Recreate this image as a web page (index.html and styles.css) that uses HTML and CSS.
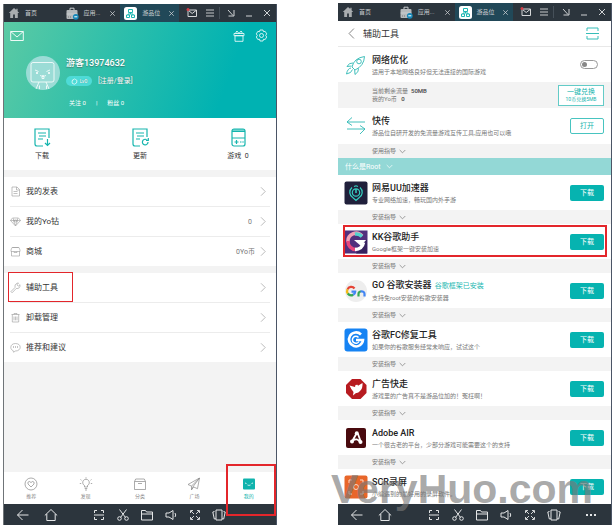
FILE: index.html
```html
<!DOCTYPE html>
<html lang="zh-CN">
<head>
<meta charset="utf-8">
<title>辅助工具</title>
<link rel="stylesheet" href="styles.css">
</head>
<body>
<svg class="sprite" aria-hidden="true">
  <symbol id="home" viewBox="0 0 12 12"><path d="M6 1 .8 6h1.4v5h2.9V7.600h1.800V11h2.900V6h1.400L9.600 4.200V1.700H8.300v1.400z" fill="#a9adb0"/></symbol>
  <symbol id="bag" viewBox="0 0 13 13"><path d="M4 3V1.200h4V3" fill="none" stroke="#c9ccce"/><rect x=".5" y="3" width="11" height="9" rx="1" fill="#b5b9bc"/><path d="M.5 7h11" stroke="#d8dadb" stroke-width=".6"/><path d="M2 10h4" stroke="#777" stroke-dasharray="1 1"/><circle cx="9.800" cy="9.800" r="2.900" fill="#1687b8"/><path d="M8.300 9.800h3" stroke="#fff"/></symbol>
  <symbol id="brand" viewBox="0 0 13 13"><rect width="13" height="13" rx="2.500" fill="#fff"/><path d="M4.500 2.500h4v3h-4zM2.500 8h3v2.500h-3zM7.500 8h3v2.500h-3zM6.500 5.500V7M4 8V7h5v1" fill="none" stroke="#1cb7b3"/></symbol>
  <symbol id="mailtab" viewBox="0 0 12 12"><path d="M2 3h8.500v6.500H2zM2.500 3.500l3.700 3 3.800-3" fill="none" stroke="#d5d7d9"/><circle cx="2" cy="2.500" r="1.500" fill="#d33c46"/></symbol>
  <symbol id="menu" viewBox="0 0 12 12"><path d="M2 3h8M2 6h8M2 9h8" stroke="#c5c8ca"/></symbol>
  <symbol id="shrink" viewBox="0 0 12 12"><path d="M3 3l5 5.500M9 3v6H3.500" fill="none" stroke="#d0d3d5"/></symbol>
  <symbol id="min" viewBox="0 0 12 12"><path d="M3 9h6" stroke="#d0d3d5"/></symbol>
  <symbol id="close" viewBox="0 0 12 12"><path d="M3 3l6 6M9 3l-6 6" stroke="#d0d3d5"/></symbol>
  <symbol id="chev" viewBox="0 0 6 10"><path d="M1 .8 5.200 5 1 9.200" fill="none" stroke="#aaa" stroke-width=".8"/></symbol>
  <symbol id="down" viewBox="0 0 7 5"><path d="M.7 1l2.800 2.800L6.300 1" fill="none" stroke="currentColor" stroke-width=".7"/></symbol>
  <symbol id="envelope" viewBox="0 0 14 12"><path d="M.7 1.500h12.600v9H.7zM.7 1.500 7 7l6.300-5.500" fill="none" stroke="#fff" stroke-width=".9"/></symbol>
  <symbol id="gift" viewBox="0 0 12 12"><path d="M1 3.500h10v2.200H1zM2 5.700h8v5.600H2zM6 3.500 4 1 2.800 2.200l1 1.300M6 3.500 8 1l1.200 1.200-1 1.300" fill="none" stroke="#fff" stroke-width=".8"/></symbol>
  <symbol id="gear" viewBox="0 0 13 13"><path d="M5 1h3l.5 1.700 1.700-.3 1.500 2.500-1 1.500 1 1.600-1.500 2.500-1.700-.3L8 12H5l-.5-1.800-1.700.3L1.300 8l1-1.600-1-1.500 1.500-2.500 1.700.3z" fill="none" stroke="#fff" stroke-width=".8" stroke-linejoin="round"/><circle cx="6.500" cy="6.500" r="2" fill="none" stroke="#fff" stroke-width=".8"/></symbol>
  <symbol id="avatar" viewBox="0 0 34 34"><circle cx="17" cy="17" r="17" fill="#9bdcd6"/><g fill="none" stroke="#fff" stroke-width=".8"><rect x="5" y="6.500" width="23" height="19.500" rx="2"/><path d="M10 33l3-7M23 33l-3-7M13.500 29.500v3.500M20.500 29.500v3.500M9 14l3.500 1.500M24 14l-3.500 1.500M14 19.500q1.500 1 3 0 1.500 1 3 0M16 20.500h2v2h-2z"/></g><circle cx="11" cy="17" r="1" fill="#fff"/><circle cx="23" cy="17" r="1" fill="#fff"/></symbol>
  <symbol id="dl" viewBox="0 0 17 19"><g fill="none" stroke="#16b5ae" stroke-width="1.200"><path d="M9 18H3q-2 0-2-2V1h14v9M4 5h8M5 8h7M4 11h5M13.500 11v6.500M11 15l2.500 2.500L16 15"/></g></symbol>
  <symbol id="upd" viewBox="0 0 17 19"><g fill="none" stroke="#16b5ae" stroke-width="1.200"><path d="M8 18H3q-2 0-2-2V1h14v8M4 5h8M5 8h7M4 11h4M16 14a2.800 2.800 0 1 1-1.500-2.400M16.300 10v2.300H14"/></g></symbol>
  <symbol id="game" viewBox="0 0 17 19"><g fill="none" stroke="#16b5ae" stroke-width="1.200"><rect x="2" y="1" width="13" height="17" rx="2"/><path d="M2 10h13M2 3.500h13M4.500 14h4M6.500 12v4M10 14h1.500M12.300 14h1.500"/></g><rect x="2" y="1" width="13" height="3" rx="1" fill="#16b5ae" opacity=".6"/></symbol>
  <symbol id="doc" viewBox="0 0 11 11"><path d="M2 1h5l2.500 2.500V10H2zM6.500 1v3H9.500M3.500 5.500h4M3.500 7.500h4" fill="none" stroke="#999" stroke-width=".6"/></symbol>
  <symbol id="gem" viewBox="0 0 11 11"><path d="M2.500 2h6L10.500 4.500 5.500 10 .5 4.500zM.5 4.500h10M3.500 2.500V5l2 4.500 2-4.500V2.500M4.500 4h2v2h-2z" fill="none" stroke="#999" stroke-width=".6"/></symbol>
  <symbol id="shop" viewBox="0 0 11 11"><path d="M2.500 1.500h6M1 4l1-2.500h7L10 4v1.500H1zM1.500 5.500V10h8V5.500M4 5.500v1h3v-1" fill="none" stroke="#999" stroke-width=".6"/></symbol>
  <symbol id="wrench" viewBox="0 0 11 11"><path d="M1 9.500 5 5.500Q4.200 2.500 7 1.200L8.500 1 7 2.800 8.300 4.200 10 2.700Q10.300 7 6.200 6.500L2.500 10.400Q1.500 10.800 1 9.500z" fill="none" stroke="#999" stroke-width=".6"/></symbol>
  <symbol id="trash" viewBox="0 0 11 11"><path d="M1.500 2.500h8M4 2.500v-1h3v1M2.300 2.500V10h6.400V2.500M4 4.500v3.800M5.500 4.500v3.800M7 4.500v3.800" fill="none" stroke="#999" stroke-width=".6"/></symbol>
  <symbol id="chat" viewBox="0 0 11 11"><path d="M5.500 1.500c3 0 4.700 1.700 4.700 3.700S8.500 9 5.500 9L3.500 10.200 3.200 8.700C1.500 8 .8 6.800.8 5.300.8 3.200 2.500 1.500 5.500 1.500z" fill="none" stroke="#999" stroke-width=".6"/><path d="M3 5h1M5 5h1M7 5h1" stroke="#888"/></symbol>
  <symbol id="heart" viewBox="0 0 14 14"><circle cx="7" cy="7" r="6" fill="none" stroke="#888" stroke-width=".7"/><path d="M7 10 4 7Q3.200 4.800 5.300 4.500 6.500 4.500 7 5.700 7.500 4.500 8.700 4.500 10.800 4.800 10 7z" fill="none" stroke="#888" stroke-width=".7"/></symbol>
  <symbol id="bulb" viewBox="0 0 14 14"><path d="M5.500 10V8.500A3.300 3.300 0 1 1 8.500 8.500V10zM5.700 11.500h2.600M6 13h2M7 .3v1.200M1.500 2.500l1 .8M12.500 2.500l-1 .8M.8 6.500h1.400M11.800 6.500h1.400" fill="none" stroke="#888" stroke-width=".7"/></symbol>
  <symbol id="box" viewBox="0 0 14 14"><path d="M1.500 4.500h11v8h-11zM1.500 4.500l1.200-2.500h8.600l1.200 2.500M5 6.500h4" fill="none" stroke="#888" stroke-width=".7"/></symbol>
  <symbol id="plane" viewBox="0 0 14 14"><path d="M12.500 1 1 7.500l3.500 1.600 8-8.100-6.500 8.700 4.500 2zM4.500 9.100v3.700l1.500-3M6.500 10.200l-2 2.600" fill="none" stroke="#888" stroke-width=".7"/></symbol>
  <symbol id="me" viewBox="0 0 14 14"><rect x="1" y="1.500" width="12" height="11" rx="1" fill="#10b3ad"/><path d="M3 6l1.500.5M11 6l-1.500.5M5.500 8q.8.800 1.500 0 .8.800 1.500 0" fill="none" stroke="#fff" stroke-width=".8"/></symbol>
  <symbol id="nback" viewBox="0 0 14 14"><path d="M12.500 7h-11M6.500 2 1.500 7l5 5" fill="none" stroke="#e4e6e7"/></symbol>
  <symbol id="nhome" viewBox="0 0 14 14"><path d="M.8 7.500 7 1.500l6.200 6M2.800 6v6.500h8.400V6" fill="none" stroke="#e4e6e7"/></symbol>
  <symbol id="nscan" viewBox="0 0 14 14"><path d="M5 2.500H2.500V5M9 2.500h2.500V5M5 11.500H2.500V9M9 11.500h2.500V9M2 7h10" fill="none" stroke="#e4e6e7"/></symbol>
  <symbol id="ncut" viewBox="0 0 14 14"><g fill="none" stroke="#e4e6e7"><path d="M3.500 1.500l6 8M10.500 1.500l-6 8"/><circle cx="3.500" cy="10.500" r="1.800"/><circle cx="10.500" cy="10.500" r="1.800"/></g></symbol>
  <symbol id="nfolder" viewBox="0 0 14 14"><path d="M1.500 2.500h4l1 1.500h6v8h-11zM1.500 6h11" fill="none" stroke="#e4e6e7"/></symbol>
  <symbol id="nsound" viewBox="0 0 14 14"><path d="M2 5h3l4-2.500v9L5 9H2zM11 5q1.500 2 0 4" fill="none" stroke="#e4e6e7"/></symbol>
  <symbol id="nfull" viewBox="0 0 14 14"><path d="M5 2.500H2.500V5M9 2.500h2.500V5M5 11.500H2.500V9M9 11.500h2.500V9M3 3l3 3M11 3 8 6M3 11l3-3M11 11 8 8" fill="none" stroke="#e4e6e7" stroke-width=".9"/></symbol>
  <symbol id="nshake" viewBox="0 0 14 14"><path d="M4 2h6v10H4zM2.500 3.500.8 4l1.500 7 1.500-.3M11.500 3.500l1.700.5-1.500 7-1.500-.3" fill="none" stroke="#e4e6e7"/></symbol>
  <symbol id="nmore" viewBox="0 0 14 14"><path d="M2 7h2M6 7h2M10 7h2" stroke="#e4e6e7" stroke-width="2"/></symbol>
</svg>

<main class="stage">
  <section class="phone profile">
    <header class="tabs">
      <div class="tab"><svg class="i12"><use href="#home"/></svg><span>首页</span></div>
      <div class="tab"><svg class="i13"><use href="#bag"/></svg><span>应用...</span><button class="x" aria-label="关闭"><svg class="i9"><use href="#close"/></svg></button></div>
      <div class="tab active"><svg class="i13"><use href="#brand"/></svg><span>游品位</span><button class="x" aria-label="关闭"><svg class="i9"><use href="#close"/></svg></button></div>
      <div class="tools">
        <button aria-label="邮件"><svg class="i12"><use href="#mailtab"/></svg></button><button class="cut" aria-label="菜单"><svg class="i12"><use href="#menu"/></svg></button><button aria-label="缩小"><svg class="i12"><use href="#shrink"/></svg></button><button aria-label="最小化"><svg class="i12"><use href="#min"/></svg></button><button aria-label="关闭"><svg class="i12"><use href="#close"/></svg></button>
      </div>
    </header>
    <div class="hero">
      <div class="hero-bar">
        <button aria-label="消息"><svg class="env"><use href="#envelope"/></svg></button>
        <button class="push" aria-label="礼物"><svg class="i12"><use href="#gift"/></svg></button>
        <button aria-label="设置"><svg class="i13"><use href="#gear"/></svg></button>
      </div>
      <div class="user">
        <svg class="avatar"><use href="#avatar"/></svg>
        <div class="who">
          <h1>游客13974632</h1>
          <div class="level"><span class="lv"><svg viewBox="0 0 7 7"><path d="M1.500 2 3 1.500 3.500.8l1 .7L6 2.500 5.500 5 3.500 6.200 1.500 5.500 1 4z" fill="none" stroke="#fff" stroke-width=".7"/></svg>Lv0</span><a href="#">[注册/登录]</a></div>
          <div class="stats"><span>关注 0</span><span>|</span><span>粉丝 0</span></div>
        </div>
      </div>
    </div>
    <div class="quick">
      <button><svg><use href="#dl"/></svg>下载</button>
      <button><svg><use href="#upd"/></svg>更新</button>
      <button><svg><use href="#game"/></svg>游戏&nbsp; 0</button>
    </div>
    <div class="list">
      <a href="#"><svg class="i11"><use href="#doc"/></svg>我的发表<svg class="chev"><use href="#chev"/></svg></a>
      <a href="#"><svg class="i11"><use href="#gem"/></svg>我的Yo钻<span class="val far">0</span><svg class="chev"><use href="#chev"/></svg></a>
      <a href="#"><svg class="i11"><use href="#shop"/></svg>商城<span class="val">0Yo币</span><svg class="chev"><use href="#chev"/></svg></a>
    </div>
    <div class="list">
      <a href="#" class="marked"><svg class="i11"><use href="#wrench"/></svg>辅助工具<svg class="chev"><use href="#chev"/></svg></a>
      <a href="#"><svg class="i11"><use href="#trash"/></svg>卸载管理<svg class="chev"><use href="#chev"/></svg></a>
      <a href="#"><svg class="i11"><use href="#chat"/></svg>推荐和建议<svg class="chev"><use href="#chev"/></svg></a>
    </div>
    <nav class="bottom">
      <a href="#"><svg class="i14"><use href="#heart"/></svg>推荐</a>
      <a href="#"><svg class="i14"><use href="#bulb"/></svg>发现</a>
      <a href="#"><svg class="i14"><use href="#box"/></svg>分类</a>
      <a href="#"><svg class="i14"><use href="#plane"/></svg>广场</a>
      <a href="#" class="on"><svg class="i14"><use href="#me"/></svg>我的</a>
    </nav>
    <footer class="nav">
      <button aria-label="返回"><svg class="i14"><use href="#nback"/></svg></button><button class="house" aria-label="主页"><svg class="i14"><use href="#nhome"/></svg></button><button aria-label="扫描"><svg class="i14"><use href="#nscan"/></svg></button><button aria-label="剪切"><svg class="i14"><use href="#ncut"/></svg></button><button aria-label="文件"><svg class="i14"><use href="#nfolder"/></svg></button><button aria-label="声音"><svg class="i14"><use href="#nsound"/></svg></button><button aria-label="全屏"><svg class="i14"><use href="#nfull"/></svg></button><button aria-label="摇一摇"><svg class="i14"><use href="#nshake"/></svg></button><button class="more" aria-label="更多"><svg class="i14"><use href="#nmore"/></svg></button>
    </footer>
  </section>

  <section class="phone toolbox">
    <header class="tabs">
      <div class="tab"><svg class="i12"><use href="#home"/></svg><span>首页</span></div>
      <div class="tab"><svg class="i13"><use href="#bag"/></svg><span>应用...</span><button class="x" aria-label="关闭"><svg class="i9"><use href="#close"/></svg></button></div>
      <div class="tab active"><svg class="i13"><use href="#brand"/></svg><span>游品位</span><button class="x" aria-label="关闭"><svg class="i9"><use href="#close"/></svg></button></div>
      <div class="tools">
        <button aria-label="邮件"><svg class="i12"><use href="#mailtab"/></svg></button><button class="cut" aria-label="菜单"><svg class="i12"><use href="#menu"/></svg></button><button aria-label="缩小"><svg class="i12"><use href="#shrink"/></svg></button><button aria-label="最小化"><svg class="i12"><use href="#min"/></svg></button><button aria-label="关闭"><svg class="i12"><use href="#close"/></svg></button>
      </div>
    </header>
    <div class="title">
      <button aria-label="返回"><svg class="back" viewBox="0 0 6 10"><path d="M5.200.5.800 5l4.400 4.500" fill="none" stroke="#777" stroke-width=".8"/></svg></button>
      <h2>辅助工具</h2>
      <button class="push" aria-label="扫描"><svg class="i13" viewBox="0 0 13 13"><path d="M1 4V1h11v3M1 9v3h11V9M0 6.500h13" fill="none" stroke="#35bdb8"/></svg></button>
    </div>
    <article class="app">
      <svg class="logo" viewBox="0 0 24 24"><g fill="none" stroke="#2fb9b4" stroke-width=".9"><path d="M8 14Q10 5 20.500 3.500 20 13 11 17zM9 10Q5 9.500 3 13.500l4.500-.500M14.500 15.500Q15 19 11 21.500l-.3-4.500M7 15q-3.500.500-4.500 6 5-.800 6-4.500"/><circle cx="15" cy="8.500" r="2.300"/></g></svg>
      <div class="info"><h3><label for="net">网络优化</label></h3><p>适用于本地网络良好但无法连接的国际游戏</p></div>
      <input type="checkbox" id="net" class="switch">
    </article>
    <div class="quota">
      <div><p>当前剩余流量&nbsp; <b>50MB</b></p><p>我的Yo币&nbsp;&nbsp; <b>0</b></p></div>
      <button class="redeem">一键兑换<small>10币兑换5MB</small></button>
    </div>
    <article class="app roomy">
      <svg class="logo" viewBox="0 0 24 24"><path d="M21 8H3l5-4.500M3 8l5 3.500M3 15h18l-5-3.500M21 15l-5 5" fill="none" stroke="#2fb9b4" stroke-width=".9"/></svg>
      <div class="info"><h3>快传</h3><p>游品位自研开发的免流量游戏互传工具,应用也可以哦</p></div>
      <button class="get open">打开</button>
    </article>
    <button class="guide">使用指导<svg><use href="#down"/></svg></button>
    <button class="root">什么是Root<svg><use href="#down"/></svg></button>

    <article class="app">
      <svg class="logo" viewBox="0 0 24 24"><rect x=".5" y=".5" width="23" height="23" rx="2" fill="#20203b"/><g fill="none" stroke="#35cfc0" stroke-width="1.200"><path d="M8 6.500a6.300 6.300 0 0 0 1 10.300l3 2.700 3-2.700a6.300 6.300 0 0 0 1-10.300M10 5.500l2-.7 2 .7"/><circle cx="12" cy="11.500" r="3.700"/></g><path d="M12 8v4" stroke="#35cfc0" stroke-width="1.500"/></svg>
      <div class="info"><h3>网易UU加速器</h3><p>专业网络加速，畅玩国内外手游</p></div><button class="get">下载</button>
    </article>
    <button class="guide">安装指导<svg><use href="#down"/></svg></button>
    <article class="app marked">
      <svg class="logo" viewBox="0 0 24 24"><rect x=".5" y=".5" width="23" height="23" fill="#51307d"/><path d="M12 23.500 23 9v14.500z" fill="#37215f"/><path d="M18 6A8 8 0 0 0 4 12" fill="none" stroke="#f2a0b5" stroke-width="3.500"/><path d="M4 11a8 8 0 0 0 8 8.500" fill="none" stroke="#e6477e" stroke-width="3.500"/><path d="M11 19.500q7 0 8.500-7" fill="none" stroke="#fff" stroke-width="3.500"/><path d="M10 10h12l-5 6z" fill="#fff"/><path d="M11 4.200q4-.700 7 2.300" fill="none" stroke="#53d2cc" stroke-width="3.500"/></svg>
      <div class="info"><h3>KK谷歌助手</h3><p>Google框架一键安装加速</p></div><button class="get">下载</button>
    </article>
    <button class="guide">安装指导<svg><use href="#down"/></svg></button>
    <article class="app">
      <svg class="logo" viewBox="0 0 24 24"><circle cx="12" cy="12" r="11" fill="#eee"/><g fill="none" stroke-width="2.200"><path d="M10.500 9.500A4 4 0 0 0 3.500 10.500" stroke="#e54335"/><path d="M3.500 10.300a4.500 4.500 0 0 0 .3 4.400" stroke="#f5b912"/><path d="M3.700 14.500q2.500 3 5.500 1.200" stroke="#36a852"/><path d="M7.500 12.700h3.700q0 2-2 3.100" stroke="#4285f4"/><path d="M14.500 17.500v-2.500q0-2.500 2.500-2.500" stroke="#36a852"/><path d="M16.500 12.500q4-.500 4 2.500v2.500" stroke="#4285f4"/></g></svg>
      <div class="info"><h3>GO 谷歌安装器 <em>谷歌框架已安装</em></h3><p>支持免root安装的谷歌安装器</p></div><button class="get">下载</button>
    </article>
    <button class="guide">安装指导<svg><use href="#down"/></svg></button>
    <article class="app">
      <svg class="logo" viewBox="0 0 24 24"><rect x=".5" y=".5" width="23" height="23" rx="3" fill="#1683f3"/><path d="M17 6.500A7 7 0 1 0 19 12h-7" fill="none" stroke="#fff" stroke-width="2.600"/><path d="M14.500 9.500a3.500 3.500 0 1 0 .5 4" fill="none" stroke="#fff" stroke-width="1.500"/></svg>
      <div class="info"><h3>谷歌FC修复工具</h3><p>如果你的谷歌服务经常未响应，试试这个</p></div><button class="get">下载</button>
    </article>
    <button class="guide">安装指导<svg><use href="#down"/></svg></button>
    <article class="app">
      <svg class="logo" viewBox="0 0 24 24"><path d="M8 2h8.500L22.500 8v8l-6 6H8L2 16V8z" fill="#b71b20"/><path d="M5.500 8.500 11 10l.5-2 2-.3.5 1L18.500 6q.5 5-2.500 8-2 2.500-4 2l-3 2.500.5-3.500q-2-2-4-6.500z" fill="#fff"/></svg>
      <div class="info"><h3>广告快走</h3><p>游戏里的广告真不是游品位加的！冤枉啊！</p></div><button class="get">下载</button>
    </article>
    <button class="guide">安装指导<svg><use href="#down"/></svg></button>
    <article class="app">
      <svg class="logo" viewBox="0 0 24 24"><rect x="2" y="2" width="20" height="20" rx="2" fill="#490a0e"/><g fill="none" stroke="#fff" stroke-width="1.800"><path d="M12.500 7.500 8 15.500M14 8l2.500 7M9 14.500q4-3 7 1.500"/></g><circle cx="12.800" cy="7.300" r="2" fill="#fff"/><circle cx="8" cy="15.500" r="2" fill="#fff"/><circle cx="16.500" cy="16" r="2" fill="#fff"/></svg>
      <div class="info"><h3>Adobe AIR</h3><p>一个很古老的平台，少部分游戏可能需要这个的支持</p></div><button class="get">下载</button>
    </article>
    <button class="guide">安装指导<svg><use href="#down"/></svg></button>
    <article class="app">
      <svg class="logo" viewBox="0 0 24 24"><rect x=".5" y=".5" width="23" height="23" rx="2" fill="#e8662a"/><g fill="none" stroke="#fbd9c5"><path d="M8 5H5v3M16 5h3v3M8 19H5v-3M16 19h3v-3"/><circle cx="12" cy="12" r="2.500"/></g></svg>
      <div class="info"><h3>SCR录屏</h3><p>小编遇到的最好用的录屏软件。</p></div><button class="get">下载</button>
    </article>
    <footer class="nav">
      <button aria-label="返回"><svg class="i14"><use href="#nback"/></svg></button><button class="house" aria-label="主页"><svg class="i14"><use href="#nhome"/></svg></button><button aria-label="扫描"><svg class="i14"><use href="#nscan"/></svg></button><button aria-label="剪切"><svg class="i14"><use href="#ncut"/></svg></button><button aria-label="文件"><svg class="i14"><use href="#nfolder"/></svg></button><button aria-label="声音"><svg class="i14"><use href="#nsound"/></svg></button><button aria-label="全屏"><svg class="i14"><use href="#nfull"/></svg></button><button aria-label="摇一摇"><svg class="i14"><use href="#nshake"/></svg></button><button class="more" aria-label="更多"><svg class="i14"><use href="#nmore"/></svg></button>
    </footer>
    <span class="watermark">VeryHuo.com</span>
  </section>
</main>
</body>
</html>
```
FILE: styles.css
```css
* { box-sizing: border-box; }
body {
  margin: 0;
  background: #fff;
  color: #333;
  font: 6px/10px Roboto, "Noto Sans CJK SC", sans-serif;
}
h1, h2, h3, p { margin: 0; font-weight: 400; }
a { color: inherit; text-decoration: none; }
button {
  margin: 0;
  padding: 0;
  border: 0;
  background: none;
  color: inherit;
  font: inherit;
  display: flex;
  align-items: center;
  justify-content: center;
}
svg { display: block; flex: none; }
.sprite { position: absolute; width: 0; height: 0; }
.i9 { width: 9px; height: 9px; }
.i11 { width: 11px; height: 11px; }
.i12 { width: 12px; height: 12px; }
.i13 { width: 13px; height: 13px; }
.i14 { width: 14px; height: 14px; }
.push { margin-left: auto; }

.stage {
  display: grid;
  grid-template-columns: 1fr 1fr;
  column-gap: 61px;
  padding: 3px;
}
.phone {
  position: relative;
  display: flex;
  flex-direction: column;
  min-width: 0;
  border-right: 1px solid #4b5566;
}
.profile {
  margin-top: 1px;
  border-left: 1px solid #6f7478;
  background: #f3f3f3;
}

/* Window tabs */
.tabs {
  display: grid;
  grid-template-columns: 58fr 59fr 59fr 98fr;
  height: 18px;
  background: #2c353d;
  color: #c9cccf;
}
.tab {
  display: flex;
  align-items: center;
  gap: 5px;
  padding-left: 4px;
  white-space: nowrap;
}
.tab .x { margin: 0 3px 0 auto; }
.tab.active { background: #214858; }
.tools { display: flex; align-items: center; justify-content: space-between; padding: 0 3px 0 7px; }
.tools .cut { border-right: 1px solid #465059; padding-right: 3px; }

/* Profile header */
.hero {
  height: 96px;
  padding: 7px 8px 0 6px;
  background: linear-gradient(110deg, #5bcaa4 0%, #27bdac 45%, #00b2b2 80%);
  color: #fff;
}
.hero-bar { display: flex; align-items: center; gap: 10px; }
.env { width: 14px; height: 12px; }
.user { display: flex; gap: 6px; padding: 14px 0 0 16px; }
.avatar { width: 34px; height: 34px; }
.who { display: flex; flex-direction: column; gap: 6px; }
.who h1 { font-size: 9px; line-height: 14px; font-weight: 500; text-shadow: 0 1px 1px #4448; }
.level { display: flex; align-items: center; gap: 6px; text-shadow: 0 0 1px #4448; }
.lv {
  display: flex;
  align-items: center;
  justify-content: center;
  gap: 2px;
  width: 26px;
  border-radius: 5px;
  background: #4edbd7;
  font-size: 5px;
}
.lv svg { width: 7px; height: 7px; }
.level a { font-size: 7px; }
.stats { display: flex; gap: 10px; padding: 6px 0 0 3px; }

.quick {
  display: flex;
  justify-content: space-between;
  height: 52px;
  margin-bottom: 7px;
  padding: 10px 18px 0;
  background: #fff;
}
.quick button { flex-direction: column; justify-content: flex-start; gap: 4px; width: 40px; font-size: 7px; }
.quick svg { width: 17px; height: 19px; }

.list { margin-bottom: 7px; padding: 0 6px; background: #fff; }
.list a {
  position: relative;
  display: flex;
  align-items: center;
  gap: 5px;
  height: 30px;
  padding-right: 4px;
  border-bottom: 1px solid #ececec;
  font-size: 8px;
}
.list a:last-child { height: 29px; border: 0; }
.list .chev { width: 6px; height: 11px; margin-left: auto; }
.val { margin-left: auto; color: #777; font-size: 7px; }
.val + .chev { margin-left: 0; }
.val.far { margin-right: 3px; }

.bottom {
  display: grid;
  grid-template-columns: repeat(5, 1fr);
  height: 32px;
  margin-top: auto;
  background: #fff;
  color: #888;
}
.bottom a {
  position: relative;
  display: flex;
  flex-direction: column;
  align-items: center;
  padding-top: 5px;
  font-size: 5px;
}
.bottom .on { color: #10b3ad; }

.nav {
  display: flex;
  align-items: center;
  height: 21px;
  padding: 0 8px 0 7px;
  background: #2c353d;
}
.nav button { width: 24px; }
.nav .house { margin: 0 auto 0 4px; }
.nav .more { margin-left: 13px; }

/* Red call-outs drawn over the interface */
.list .marked::after, .app.marked::after, .bottom .on::after {
  content: "";
  position: absolute;
  border: 1px solid #e3262b;
  pointer-events: none;
}
.list .marked::after { left: -2px; top: -1px; width: 63px; height: 28px; }
.app.marked::after { inset: 1px 4px 2px 5px; border-width: 2px; }
.bottom .on::after { left: 4px; top: -8px; width: 46px; height: 48px; border-width: 2px; z-index: 1; }

/* Toolbox */
.title {
  display: flex;
  align-items: center;
  gap: 8px;
  height: 26px;
  padding: 0 12px 0 10px;
  border-bottom: 1px solid #e8e8e8;
}
.title h2 { font-size: 9px; line-height: 14px; }
.back { width: 7px; height: 11px; }
.app {
  position: relative;
  display: flex;
  align-items: center;
  gap: 4px;
  height: 35px;
  padding: 0 7px 0 6px;
}
.app.roomy { height: 36px; }
.logo { width: 24px; height: 24px; }
.info { flex: 1; min-width: 0; color: #777; white-space: nowrap; }
.info h3 { color: #222; font-size: 9px; line-height: 14px; font-weight: 500; }
.info em { margin-left: 1px; color: #1eb8b2; font-size: 7px; font-style: normal; font-weight: 400; }
.get {
  width: 34px;
  height: 16px;
  border-radius: 2px;
  background: #06b3b0;
  color: #fff;
  font-size: 7px;
}
.open { border: 1px solid #48c4c0; background: #fff; color: #16b5ae; }
.switch {
  appearance: none;
  display: flex;
  align-items: center;
  width: 18px;
  height: 9px;
  margin: 0 6px 0 0;
  padding-left: 1px;
  border: 1px solid #999;
  border-radius: 5px;
  background: #fff;
}
.switch::before { content: ""; width: 5px; height: 5px; border-radius: 50%; background: #888; }
.quota {
  display: flex;
  align-items: center;
  justify-content: space-between;
  height: 26px;
  padding: 0 7px 0 34px;
  background: #f3f3f3;
  color: #777;
  line-height: 8px;
}
.quota b { color: #444; font-weight: 500; }
.redeem {
  flex-direction: column;
  width: 46px;
  height: 21px;
  border: 1px solid #63cbc7;
  background: #fff;
  color: #16b5ae;
  font-size: 7px;
}
.redeem small { font-size: 5px; line-height: 7px; }
.guide, .root { justify-content: flex-start; gap: 3px; }
.guide { height: 14px; padding-left: 34px; background: #f3f3f3; color: #777; }
.root { height: 17px; padding-left: 7px; gap: 5px; background: #93d8d6; color: #fff; font-size: 7px; }
.guide svg, .root svg { width: 7px; height: 5px; }

.watermark {
  position: absolute;
  left: -7px;
  bottom: 13px;
  color: rgba(120, 120, 120, .65);
  font: bold 41px/46px "Liberation Sans", sans-serif;
  pointer-events: none;
}
```
